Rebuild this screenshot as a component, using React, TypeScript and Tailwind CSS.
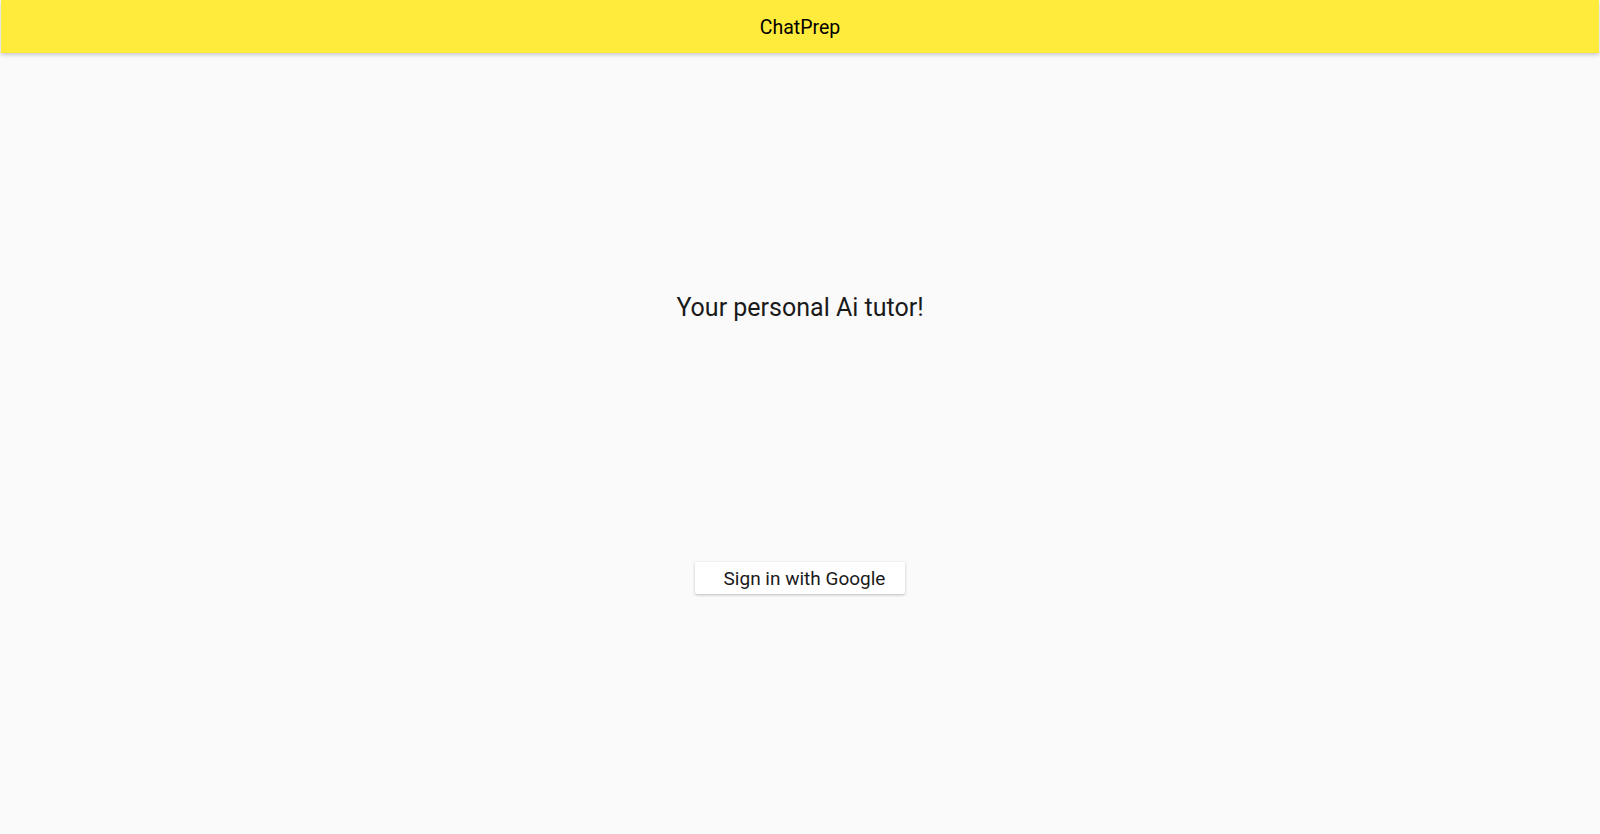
export default function App() {
  return (
    <div
      className="min-h-[834px] w-full bg-[#fafafa] flex flex-col"
      style={{ fontFamily: "Roboto, 'Liberation Sans', sans-serif" }}
    >
      <header className="h-[53px] mx-px pt-[2px] bg-[#ffeb3b] flex items-center justify-center shadow-[0_2px_4px_rgba(0,0,0,0.2)] relative z-10">
        <span className="text-[19.5px] font-normal text-black">ChatPrep</span>
      </header>

      <main className="flex flex-col items-center">
        <h1 className="mt-[239px] text-[25px] leading-[32px] font-normal text-[#1a1a1a]">
          Your personal Ai tutor!
        </h1>
        <button className="mt-[238px] h-[32px] pl-[29px] pr-[20px] bg-white rounded-[2px] shadow-[0_1px_3px_rgba(0,0,0,0.25)] text-[19px] text-[#1a1a1a] leading-none">
          Sign in with Google
        </button>
      </main>
    </div>
  );
}
